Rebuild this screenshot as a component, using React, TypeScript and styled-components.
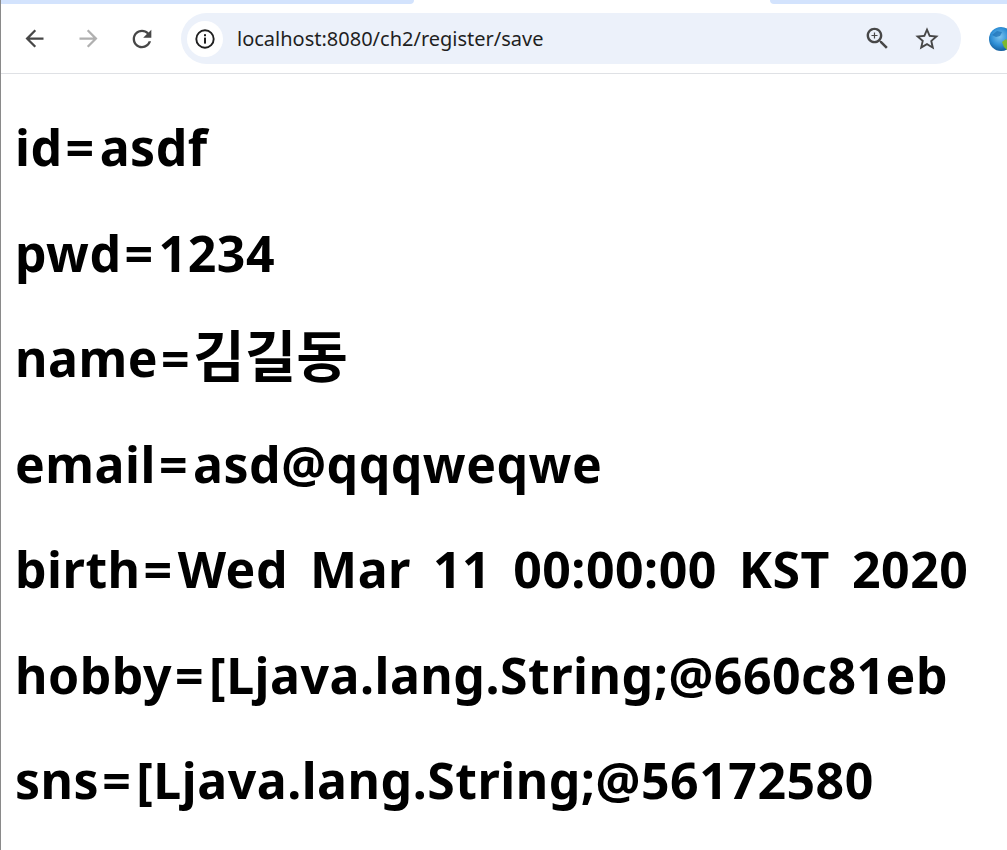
import React, { FC } from 'react';
import styled, { createGlobalStyle } from 'styled-components';

const GlobalStyle = createGlobalStyle`
    html, body {
        margin: 0;
        padding: 0;
        background: #ffffff;
    }
`;

const Page = styled.div`
    width: 1007px;
    height: 850px;
    overflow: hidden;
    display: flex;
    flex-direction: column;
    border-left: 1px solid #8a8a8a;
    box-sizing: border-box;
`;

const TabStrip = styled.div`
    height: 4px;
    flex: none;
    display: flex;
    justify-content: space-between;
`;

const InactiveTab = styled.div<{ $width: number; $side: 'left' | 'right' }>`
    width: ${(p) => p.$width}px;
    background: #d3e3fd;
    border-bottom-${(p) => p.$side}-radius: 5px;
`;

const Toolbar = styled.div`
    height: 70px;
    flex: none;
    box-sizing: border-box;
    display: flex;
    align-items: center;
    border-bottom: 1px solid #dfe1e5;
    padding-left: 15px;
`;

const NavButton = styled.div<{ $color: string }>`
    width: 36px;
    height: 36px;
    margin-right: 18px;
    flex: none;
    display: flex;
    align-items: center;
    justify-content: center;
    color: ${(p) => p.$color};
`;

const Omnibox = styled.div`
    width: 780px;
    height: 51px;
    margin-left: 3px;
    flex: none;
    border-radius: 26px;
    background: #ecf1fa;
    display: flex;
    align-items: center;
    padding: 0 10px 0 6px;
    box-sizing: border-box;
`;

const InfoChip = styled.div`
    width: 36px;
    height: 36px;
    border-radius: 50%;
    background: #ffffff;
    display: flex;
    align-items: center;
    justify-content: center;
    flex: none;
`;

const Url = styled.span`
    margin-left: 14px;
    flex: 1;
    font-family: 'Noto Sans', 'Liberation Sans', sans-serif;
    font-size: 20px;
    color: #1f1f1f;
`;

const OmniIcon = styled.div`
    width: 49px;
    display: flex;
    justify-content: center;
    color: #474747;
`;

const Globe = styled.svg`
    margin-left: 28px;
    flex: none;
`;

const Content = styled.main`
    padding: 43px 0 0 14px;
`;

const Line = styled.p`
    margin: 0 0 45px;
    height: 60.5px;
    line-height: 60px;
    font-family: 'Noto Sans', 'Noto Sans CJK KR', sans-serif;
    font-size: 50px;
    font-weight: 700;
    letter-spacing: 0.5px;
    word-spacing: 8.5px;
    color: #000000;
    white-space: nowrap;
`;

const Equals = styled.span`
    margin: 0 5px 0 3px;
`;

const Hangul = styled.span`
    font-size: 56px;
    line-height: 0;
    letter-spacing: 0;
    margin-left: -2px;
`;

const MaterialIcon: FC<{ d: string; size: number }> = ({ d, size }) => (
    <svg width={size} height={size} viewBox='0 0 24 24' fill='currentColor'>
        <path d={d} />
    </svg>
);

const ICON_BACK = 'M20 11H7.83l5.59-5.59L12 4l-8 8 8 8 1.41-1.41L7.83 13H20v-2z';
const ICON_FORWARD = 'M4 11h12.17l-5.59-5.59L12 4l8 8-8 8-1.41-1.41L16.17 13H4v-2z';
const ICON_RELOAD =
    'M17.65 6.35C16.2 4.9 14.21 4 12 4c-4.42 0-7.99 3.58-7.99 8s3.57 8 7.99 8c3.73 0 6.84-2.55 7.73-6h-2.08c-.82 2.33-3.04 4-5.65 4-3.31 0-6-2.69-6-6s2.69-6 6-6c1.66 0 3.14.69 4.22 1.78L13 11h7V4l-2.35 2.35z';
const ICON_ZOOM =
    'M15.5 14h-.79l-.28-.27C15.41 12.59 16 11.11 16 9.5 16 5.91 13.09 3 9.5 3S3 5.91 3 9.5 5.91 16 9.5 16c1.61 0 3.09-.59 4.23-1.57l.27.28v.79l5 4.99L20.49 19l-4.99-5zm-6 0C7.01 14 5 11.99 5 9.5S7.01 5 9.5 5 14 7.01 14 9.5 11.99 14 9.5 14zm2.5-4h-2v2H9v-2H7V9h2V7h1v2h2v1z';
const ICON_STAR =
    'M22 9.24l-7.19-.62L12 2 9.19 8.63 2 9.24l5.46 4.73L5.82 21 12 17.27 18.18 21l-1.63-7.03L22 9.24zM12 15.4l-3.76 2.27 1-4.28-3.32-2.88 4.38-.38L12 6.1l1.71 4.04 4.38.38-3.32 2.88 1 4.28L12 15.4z';

const lines: [string, string][] = [
    ['id', 'asdf'],
    ['pwd', '1234'],
    ['name', '김길동'],
    ['email', 'asd@qqqweqwe'],
    ['birth', 'Wed Mar 11 00:00:00 KST 2020'],
    ['hobby', '[Ljava.lang.String;@660c81eb'],
    ['sns', '[Ljava.lang.String;@56172580'],
];

const App: FC = () => {
    return (
        <Page>
            <GlobalStyle />
            <TabStrip>
                <InactiveTab $width={413} $side='right' />
                <InactiveTab $width={237} $side='left' />
            </TabStrip>
            <Toolbar>
                <NavButton $color='#474747'>
                    <MaterialIcon d={ICON_BACK} size={27} />
                </NavButton>
                <NavButton $color='#b0b0b0'>
                    <MaterialIcon d={ICON_FORWARD} size={27} />
                </NavButton>
                <NavButton $color='#474747'>
                    <MaterialIcon d={ICON_RELOAD} size={28} />
                </NavButton>
                <Omnibox>
                    <InfoChip>
                        <svg width='22' height='22' viewBox='0 0 22 22' fill='none'>
                            <circle cx='11' cy='11' r='8.7' stroke='#1f1f1f' strokeWidth='1.9' />
                            <rect x='10' y='9.6' width='2' height='6' fill='#1f1f1f' />
                            <rect x='10' y='6.2' width='2' height='2' fill='#1f1f1f' />
                        </svg>
                    </InfoChip>
                    <Url>localhost:8080/ch2/register/save</Url>
                    <OmniIcon>
                        <MaterialIcon d={ICON_ZOOM} size={29} />
                    </OmniIcon>
                    <OmniIcon>
                        <MaterialIcon d={ICON_STAR} size={28} />
                    </OmniIcon>
                </Omnibox>
                <Globe width='24' height='24' viewBox='0 0 24 24'>
                    <defs>
                        <radialGradient id='globeFill' cx='45%' cy='40%' r='60%'>
                            <stop offset='0%' stopColor='#7cc4ee' />
                            <stop offset='60%' stopColor='#2f8fd6' />
                            <stop offset='100%' stopColor='#145f9e' />
                        </radialGradient>
                    </defs>
                    <circle cx='12' cy='12' r='12' fill='url(#globeFill)' />
                    <path d='M3 8l5-4 5 1-2 4-4 1z' fill='#1b6fb5' opacity='0.7' />
                    <path d='M13 15l4-3 4 5-3 6-3-3z' fill='#7cb82f' />
                </Globe>
            </Toolbar>
            <Content>
                {lines.map(([key, value]) => (
                    <Line key={key}>
                        {key}
                        <Equals>=</Equals>
                        {key === 'name' ? <Hangul>{value}</Hangul> : value}
                    </Line>
                ))}
            </Content>
        </Page>
    );
};

export default App;
